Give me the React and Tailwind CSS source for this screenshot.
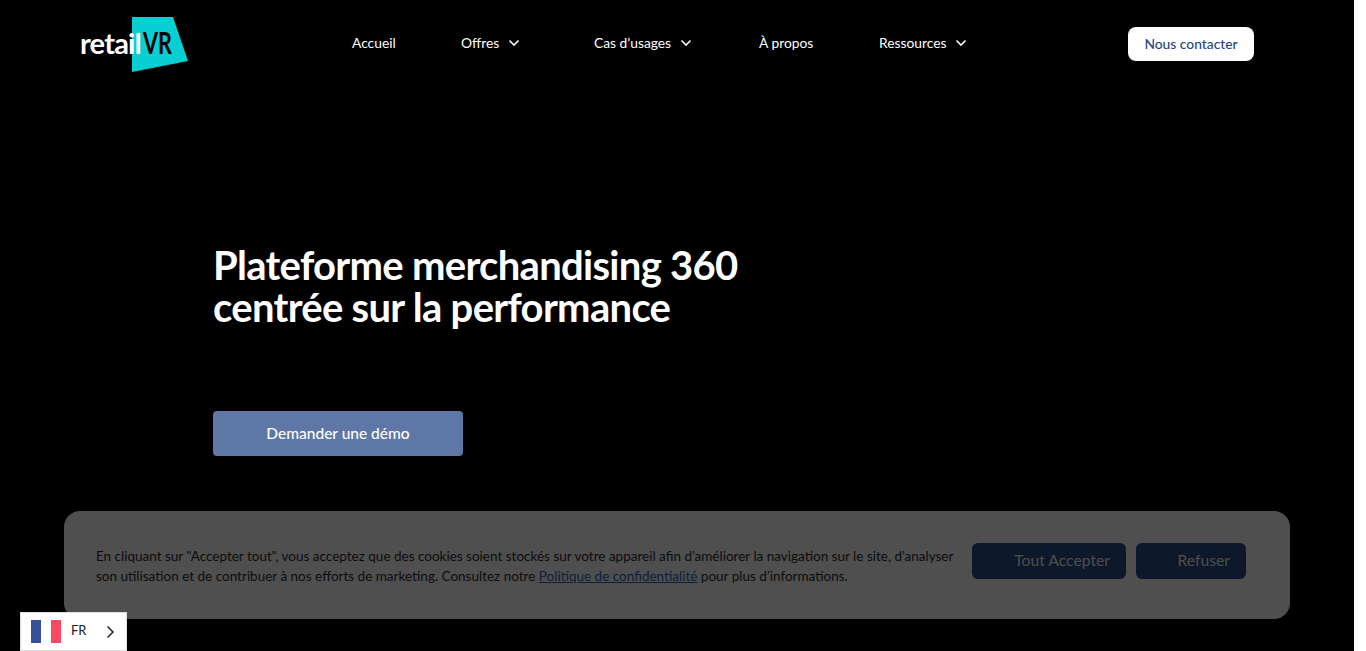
import React from 'react';

const font = { fontFamily: 'Lato, "Noto Sans", sans-serif' };

function Chevron() {
  return (
    <svg width="12" height="8" viewBox="0 0 12 8" fill="none" stroke="white" strokeWidth="1.6">
      <path d="M1.500 1.500l4.500 4.500 4.500-4.500" />
    </svg>
  );
}

function Logo() {
  return (
    <div className="relative w-[108px] h-[56px]">
      <svg width="108" height="56" viewBox="0 0 108 56" className="absolute left-0 top-0">
        <polygon points="51,1 92,1 107,45 51,56" fill="#07cfd2" />
      </svg>
      <span className="absolute -left-[1px] top-[10px] text-white text-[29px] leading-[34px] tracking-[-0.8px] font-bold">retail</span>
      <span className="absolute left-[62px] top-[8px] text-black text-[30px] leading-[36px] font-bold scale-x-[0.72] origin-left">VR</span>
    </div>
  );
}

function NavItem({ label, chevron, className }) {
  return (
    <a className={`flex items-center gap-[9px] text-white text-[13.8px] ${className}`}>
      {label}
      {chevron && <Chevron />}
    </a>
  );
}

export default function App() {
  return (
    <div className="flex w-full h-[651px] overflow-hidden bg-white" style={font}>
      <div className="relative w-[1354px] h-full bg-black">
        <header className="flex items-start pl-[81px] pt-[16px]">
          <Logo />
          <nav className="flex items-center h-[54px] ml-[163px]">
            <NavItem label="Accueil" className="w-[109px]" />
            <NavItem label="Offres" chevron className="w-[133px]" />
            <NavItem label="Cas d’usages" chevron className="w-[165px]" />
            <NavItem label="À propos" className="w-[120px]" />
            <NavItem label="Ressources" chevron className="w-[249px]" />
            <a className="flex items-center justify-center w-[126px] h-[34px] mt-[2px] rounded-[8px] bg-white text-[#2b4482] text-[13.8px] font-medium">Nous contacter</a>
          </nav>
        </header>

        <main className="pl-[213px] pt-[172px]">
          <h1 className="text-white text-[40px] leading-[42px] font-bold tracking-[-0.7px]">
            Plateforme merchandising 360<br />centrée sur la performance
          </h1>
          <a className="flex items-center justify-center mt-[83px] w-[250px] h-[45px] rounded-[4px] bg-[#5e77a6] text-white text-[15.500px] font-medium">Demander une démo</a>
        </main>

        <div className="absolute left-[64px] top-[511px] w-[1226px] h-[108px] rounded-[16px] bg-[#4f4f4f] flex items-center pl-[32px] pr-[44px]">
          <p className="w-[860px] text-[#0c0c0c] text-[13.500px] leading-[20px] mt-[1px]">
            En cliquant sur "Accepter tout", vous acceptez que des cookies soient stockés sur votre appareil afin d’améliorer la navigation sur le site, d’analyser son utilisation et de contribuer à nos efforts de marketing. Consultez notre <a className="text-[#101c38] underline">Politique de confidentialité</a> pour plus d’informations.
          </p>
          <div className="flex gap-[10px] ml-auto -mt-[8px]">
            <button className="w-[154px] h-[36px] rounded-[6px] bg-[#0d182b] text-[#4f4f4f] text-[15.700px] text-right pr-[16px]">Tout Accepter</button>
            <button className="w-[110px] h-[36px] rounded-[6px] bg-[#0d182b] text-[#4f4f4f] text-[15.700px] text-right pr-[16px]">Refuser</button>
          </div>
        </div>

        <div className="absolute left-[20px] top-[612px] w-[107px] h-[39px] bg-white border border-[#e0e0e0] flex items-center pl-[10px]">
          <div className="flex w-[30px] h-[23px]">
            <span className="flex-1 bg-[#36509a]" />
            <span className="flex-1 bg-white" />
            <span className="flex-1 bg-[#fa4a63]" />
          </div>
          <span className="ml-[10px] -mt-[2px] text-[13px] text-[#222]">FR</span>
          <svg width="9" height="14" viewBox="0 0 9 14" fill="none" stroke="#222" strokeWidth="1.5" className="ml-[19px]">
            <path d="M1.500 1.500L7 7l-5.500 5.500" />
          </svg>
        </div>
      </div>
    </div>
  );
}
